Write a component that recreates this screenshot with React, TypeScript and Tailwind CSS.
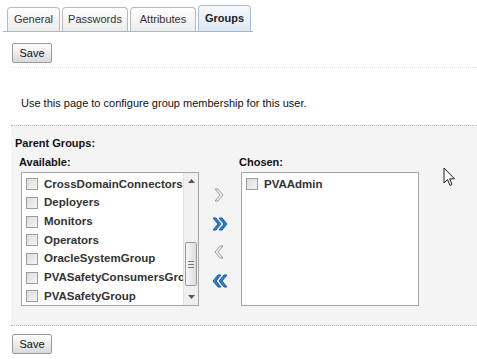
import type { ReactNode } from "react";

const available = [
  "CrossDomainConnectors",
  "Deployers",
  "Monitors",
  "Operators",
  "OracleSystemGroup",
  "PVASafetyConsumersGroup",
  "PVASafetyGroup",
];

const chosen = ["PVAAdmin"];

function Tab({ label, active, w }: { label: string; active?: boolean; w: string }) {
  return (
    <div
      className={`${w} flex items-center justify-center border border-b-0 rounded-t-[4px] ${
        active
          ? "h-[26px] border-[#a9bccf] bg-gradient-to-b from-[#f4f8fc] to-[#dde9f5] font-bold text-[#222]"
          : "h-[24px] border-[#b9b9b9] bg-gradient-to-b from-white to-[#ececec] text-[#333]"
      }`}
    >
      {label}
    </div>
  );
}

function SaveButton() {
  return (
    <button className="ml-[12px] w-[40px] h-[20px] border border-[#9a9a9a] rounded-[2px] bg-gradient-to-b from-white to-[#dadada] text-[11px] text-[#111] leading-none">
      Save
    </button>
  );
}

function Checkbox() {
  return <span className="w-[12px] h-[12px] shrink-0 border border-[#9c9c9c] bg-gradient-to-br from-[#dcdcdc] to-[#f6f6f6]" />;
}

function Row({ label }: { label: string }) {
  return (
    <div className="h-[18.67px] flex items-center gap-[6px] pl-[4px] whitespace-nowrap">
      <Checkbox />
      <span className="font-bold text-[11.5px] text-[#333]">{label}</span>
    </div>
  );
}

function Scrollbar() {
  return (
    <div className="w-[15px] h-full shrink-0 bg-[#f0f0f0] border-l border-[#e2e2e2] flex flex-col">
      <div className="h-[16px] flex items-center justify-center">
        <svg width="7" height="4" viewBox="0 0 7 4">
          <path d="M0 4 L3.5 0 L7 4 Z" fill="#555" />
        </svg>
      </div>
      <div className="flex-1 relative">
        <div className="absolute left-[1px] right-[1px] top-[53px] h-[44px] border border-[#9b9b9b] rounded-[2px] bg-gradient-to-r from-[#f8f8f8] to-[#dcdcdc] flex flex-col items-center justify-center gap-[2px]">
          <span className="w-[6px] h-px bg-[#777]" />
          <span className="w-[6px] h-px bg-[#777]" />
          <span className="w-[6px] h-px bg-[#777]" />
        </div>
      </div>
      <div className="h-[16px] flex items-center justify-center">
        <svg width="7" height="4" viewBox="0 0 7 4">
          <path d="M0 0 L3.5 4 L7 0 Z" fill="#555" />
        </svg>
      </div>
    </div>
  );
}

function ListBox({ items, scroll }: { items: string[]; scroll?: boolean }) {
  return (
    <div className="w-[178px] h-[134px] border border-[#a6a6a6] bg-white flex overflow-hidden">
      <div className="flex-1 min-w-0 overflow-hidden pt-[2px]">
        {items.map((i) => (
          <Row key={i} label={i} />
        ))}
      </div>
      {scroll && <Scrollbar />}
    </div>
  );
}

function Chevron({ dir, double, blue }: { dir: "r" | "l"; double?: boolean; blue?: boolean }) {
  const fill = blue ? "#2f7fd6" : "#f2f2f2";
  const stroke = blue ? "#1a5aa8" : "#9a9a9a";
  const one = (x: number) =>
    dir === "r"
      ? `M${x} 1 L${x + 3} 1 L${x + 8} 7 L${x + 3} 13 L${x} 13 L${x + 5} 7 Z`
      : `M${x + 8} 1 L${x + 5} 1 L${x} 7 L${x + 5} 13 L${x + 8} 13 L${x + 3} 7 Z`;
  return (
    <svg width={double ? 16 : 11} height="14" viewBox={double ? "0 0 16 14" : "0 0 11 14"}>
      <path d={one(1)} fill={fill} stroke={stroke} strokeWidth="1" strokeLinejoin="round" />
      {double && <path d={one(7)} fill={fill} stroke={stroke} strokeWidth="1" strokeLinejoin="round" />}
    </svg>
  );
}

function Label({ children, className = "" }: { children: ReactNode; className?: string }) {
  return <div className={`h-[14px] leading-[14px] font-bold text-[#111] ${className}`}>{children}</div>;
}

export default function App() {
  return (
    <div className="w-[477px] h-[359px] bg-white relative overflow-hidden font-['Liberation_Sans',Arial,sans-serif] text-[11px]">
      {/* tabs */}
      <div className="ml-[3px] w-[250px] h-[32px] pt-[5px] pl-[4px] border-b border-[#a8b7c6] flex items-end gap-[2px]">
        <Tab label="General" w="w-[53px]" />
        <Tab label="Passwords" w="w-[66px]" />
        <Tab label="Attributes" w="w-[66px]" />
        <Tab label="Groups" w="w-[53px]" active />
      </div>

      <div className="mt-[11px]">
        <SaveButton />
      </div>

      <div className="mt-[4px] ml-[12px] border-t border-dotted border-[#e4e4e4]" />

      <p className="ml-[21px] mt-[28px] h-[14px] leading-[14px] text-[#111]">
        Use this page to configure group membership for this user.
      </p>

      {/* parent groups panel */}
      <div className="mt-[15px] ml-[11px] h-[201px] bg-[#f4f4f4] border-t border-b border-dotted border-[#b5b5b5] pt-[10px]">
        <Label className="ml-[4px]">Parent Groups:</Label>
        <div className="mt-[5px] ml-[8px] flex">
          <div className="w-[179px] flex flex-col">
            <Label>Available:</Label>
            <div className="mt-[3px] ml-[2px]">
              <ListBox items={available} scroll />
            </div>
          </div>
          <div className="w-[41px] pt-[33px] flex flex-col items-center gap-[14.7px] pl-[2px]">
            <Chevron dir="r" />
            <Chevron dir="r" double blue />
            <Chevron dir="l" />
            <Chevron dir="l" double blue />
          </div>
          <div className="flex flex-col">
            <Label>Chosen:</Label>
            <div className="mt-[3px] ml-[2px]">
              <ListBox items={chosen} />
            </div>
          </div>
        </div>
      </div>

      <div className="mt-[8px]">
        <SaveButton />
      </div>

      {/* mouse cursor */}
      <svg className="absolute left-[443px] top-[167px]" width="14" height="22" viewBox="0 0 14 22">
        <path d="M1 1 L1 16 L4.5 12.5 L7 18.5 L9 17.6 L6.6 11.8 L11.5 11.8 Z" fill="white" stroke="#222" strokeWidth="1" strokeLinejoin="round" />
      </svg>
    </div>
  );
}
